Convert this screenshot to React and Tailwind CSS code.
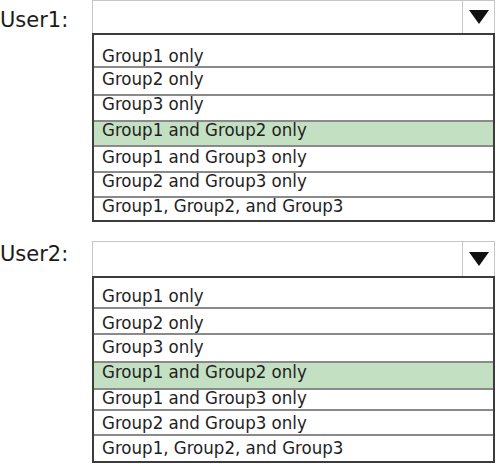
import React from "react";

const list1 = [
  { t: "Group1 only", row: "h-[31px] pt-[13px]" },
  { t: "Group2 only", row: "h-[28px] pt-[3px] border-t-2 border-[#8a8a8a]" },
  { t: "Group3 only", row: "h-[26px] pt-[0px] border-t-2 border-[#8a8a8a]" },
  { t: "Group1 and Group2 only", row: "h-[25px] pt-[0px] border-t-2 border-[#8a8a8a] bg-[#c4e0c2]" },
  { t: "Group1 and Group3 only", row: "h-[26px] pt-[2px] border-t-2 border-[#8a8a8a]" },
  { t: "Group2 and Group3 only", row: "h-[25px] pt-[0px] border-t-2 border-[#8a8a8a]" },
  { t: "Group1, Group2, and Group3", row: "h-[24px] pt-[0px] border-t-2 border-[#8a8a8a]" },
];

const list2 = [
  { t: "Group1 only", row: "h-[29px] pt-[10px]" },
  { t: "Group2 only", row: "h-[26px] pt-[6px] border-t-2 border-[#8a8a8a]" },
  { t: "Group3 only", row: "h-[28px] pt-[4px] border-t-2 border-[#8a8a8a]" },
  { t: "Group1 and Group2 only", row: "h-[27px] pt-[1px] border-t-2 border-[#8a8a8a] bg-[#c4e0c2]" },
  { t: "Group1 and Group3 only", row: "h-[21px] pt-[0px] border-t-2 border-[#8a8a8a]" },
  { t: "Group2 and Group3 only", row: "h-[25px] pt-[4px] border-t-2 border-[#8a8a8a]" },
  { t: "Group1, Group2, and Group3", row: "h-[27px] pt-[4px] border-t-2 border-[#8a8a8a]" },
];

function Select({ h }) {
  return (
    <div className={`flex ${h} border border-b-0 border-[#c6c6c6] bg-white`}>
      <div className="flex-1" />
      <div className="w-[32px] border-l border-[#c6c6c6] flex items-center justify-center">
        <svg width="20" height="14" viewBox="0 0 20 14">
          <polygon points="0,0 20,0 10,14" fill="#111" />
        </svg>
      </div>
    </div>
  );
}

function List({ items }) {
  return (
    <div className="border-2 border-[#3c3c3c] bg-white">
      {items.map((it) => (
        <div key={it.t} className={`${it.row} pl-[8px] overflow-visible`}>
          <div className="text-[18.5px] leading-[16px] text-[#1e1e1e] whitespace-nowrap">{it.t}</div>
        </div>
      ))}
    </div>
  );
}

function Group({ label, labelPad, selectH, items, extra }) {
  return (
    <div className={`flex ${extra}`}>
      <div className={`w-[92px] ${labelPad} text-[21px] leading-[24px] text-[#1a1a1a] font-['DejaVu_Sans',sans-serif]`}>
        {label}
      </div>
      <div className="w-[403px] flex flex-col">
        <Select h={selectH} />
        <List items={items} />
      </div>
    </div>
  );
}

export default function App() {
  return (
    <div className="w-[496px] h-[464px] bg-white overflow-hidden font-['DejaVu_Sans_Condensed','DejaVu_Sans',sans-serif]">
      <Group label="User1:" labelPad="pt-[8px]" selectH="h-[33px]" items={list1} extra="" />
      <Group label="User2:" labelPad="pt-[1px]" selectH="h-[35px]" items={list2} extra="mt-[19px]" />
    </div>
  );
}
